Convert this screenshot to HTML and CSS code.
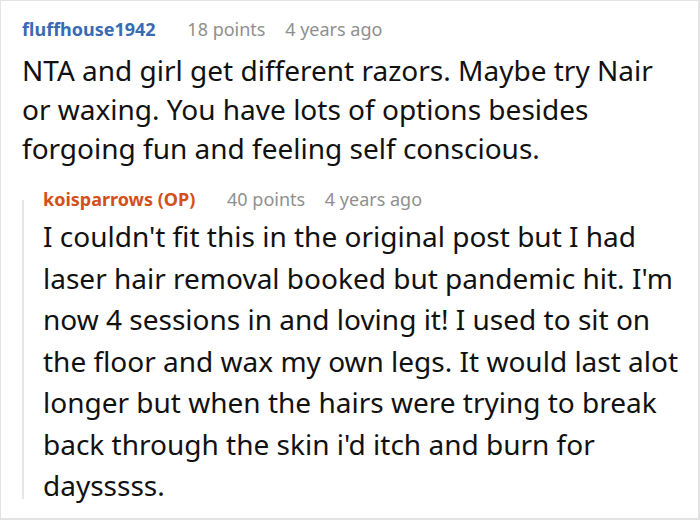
FILE: index.html
```html
<!DOCTYPE html>
<html>
<head>
<meta charset="utf-8">
<link rel="stylesheet" href="styles.css">
</head>
<body>
<div class="thread">
  <div class="comment">
    <div class="meta">
      <span class="user">fluffhouse1942</span>
      <span class="points">18 points</span>
      <span class="time">4 years ago</span>
    </div>
    <p class="body first">NTA and girl get different razors. Maybe try Nair or waxing. You have lots of options besides forgoing fun and feeling self conscious.</p>
  </div>
  <div class="reply">
    <div class="rail"></div>
    <div class="reply-content">
      <div class="meta">
        <span class="user op">koisparrows (OP)</span>
        <span class="points">40 points</span>
        <span class="time">4 years ago</span>
      </div>
      <p class="body second">I couldn't fit this in the original post but I had laser hair removal booked but pandemic hit. I'm now 4 sessions in and loving it! I used to sit on the floor and wax my own legs. It would last alot longer but when the hairs were trying to break back through the skin i'd itch and burn for daysssss.</p>
    </div>
  </div>
</div>
</body>
</html>
```
FILE: styles.css
```css
html, body {
  margin: 0;
  padding: 0;
  background: #ffffff;
}
.thread {
  box-sizing: border-box;
  width: 700px;
  height: 520px;
  border: 1px solid #e3e3e3;
  border-right-width: 2px;
  border-bottom-width: 2px;
  padding: 16px 8px 0 21px;
  font-family: "Noto Sans", "Open Sans", sans-serif;
  color: #111111;
  overflow: hidden;
}
.meta {
  font-size: 18px;
  line-height: 24px;
  white-space: nowrap;
}
.user {
  font-weight: 700;
  color: #3a6ab3;
}
.user.op {
  color: #d2501b;
}
.points {
  color: #8f8f8f;
  margin-left: 27px;
}
.time {
  color: #8f8f8f;
  margin-left: 15px;
}
.body {
  margin: 0;
  font-size: 28px;
}
.body.first {
  max-width: 642px;
  margin-top: 10px;
  line-height: 39px;
}
.body.second {
  margin-top: 5px;
  line-height: 41.5px;
}
.reply {
  display: grid;
  grid-template-columns: 2px 1fr;
  column-gap: 19px;
  margin-top: 19px;
}
.rail {
  background: #e6e6e6;
  margin: 13px 0 8px 0;
}
```
